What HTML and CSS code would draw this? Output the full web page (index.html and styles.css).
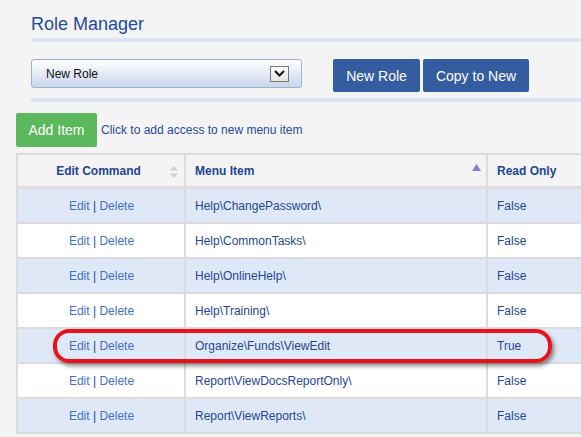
FILE: index.html
```html
<!DOCTYPE html>
<html lang="en">
<head>
    <meta charset="UTF-8">
    <title>Role Manager</title>
    <link rel="stylesheet" href="styles.css">
</head>
<body>
    <div class="page">
        <div class="top">
            <h1 class="title">Role Manager</h1>
            <div class="rule"></div>

            <!-- role picker + actions -->
            <div class="role-bar">
                <div class="picker">
                    <span class="picker-text">New Role</span>
                    <span class="picker-arrow">
                        <svg width="11" height="7" viewBox="0 0 11 7"><path d="M1 1 L5.5 5.5 L10 1" fill="none" stroke="#111" stroke-width="2"/></svg>
                    </span>
                </div>
                <button class="btn btn-blue btn-new">New Role</button>
                <button class="btn btn-blue btn-copy">Copy to New</button>
            </div>
            <div class="rule"></div>
        </div>

        <div class="add-row">
            <button class="btn btn-green">Add Item</button>
            <span class="hint">Click to add access to new menu item</span>
        </div>

        <div class="grid-wrap">
            <table class="grid">
                <colgroup>
                    <col class="c-cmd">
                    <col class="c-item">
                    <col class="c-ro">
                </colgroup>
                <thead>
                    <tr>
                        <th class="center">Edit Command
                            <span class="sort">
                                <svg width="8" height="12" viewBox="0 0 8 12"><path d="M4 0 L8 4.5 L0 4.5 Z M4 12 L8 7.5 L0 7.5 Z" fill="#cfcfcf"/></svg>
                            </span>
                        </th>
                        <th>Menu Item
                            <span class="sort sort-on">
                                <svg width="9" height="7" viewBox="0 0 9 7"><path d="M4.5 0 L9 7 L0 7 Z" fill="#7d80dc"/></svg>
                            </span>
                        </th>
                        <th>Read Only</th>
                    </tr>
                </thead>
                <tbody>
                    <tr class="alt">
                        <td class="center"><a>Edit</a> | <a>Delete</a></td>
                        <td>Help\ChangePassword\</td>
                        <td>False</td>
                    </tr>
                    <tr>
                        <td class="center"><a>Edit</a> | <a>Delete</a></td>
                        <td>Help\CommonTasks\</td>
                        <td>False</td>
                    </tr>
                    <tr class="alt">
                        <td class="center"><a>Edit</a> | <a>Delete</a></td>
                        <td>Help\OnlineHelp\</td>
                        <td>False</td>
                    </tr>
                    <tr>
                        <td class="center"><a>Edit</a> | <a>Delete</a></td>
                        <td>Help\Training\</td>
                        <td>False</td>
                    </tr>
                    <tr class="alt">
                        <td class="center"><a>Edit</a> | <a>Delete</a></td>
                        <td>Organize\Funds\ViewEdit</td>
                        <td>True</td>
                    </tr>
                    <tr>
                        <td class="center"><a>Edit</a> | <a>Delete</a></td>
                        <td>Report\ViewDocsReportOnly\</td>
                        <td>False</td>
                    </tr>
                    <tr class="alt">
                        <td class="center"><a>Edit</a> | <a>Delete</a></td>
                        <td>Report\ViewReports\</td>
                        <td>False</td>
                    </tr>
                </tbody>
            </table>
            <!-- red callout round the True row -->
            <div class="callout"></div>
        </div>
    </div>
</body>
</html>
```

FILE: styles.css
```css
html, body {
    margin: 0;
    padding: 0;
    overflow: hidden;
}
body {
    background-color: #f4f4f4;
    font-family: "Liberation Sans", Arial, sans-serif;
    font-size: 12px;
    color: #1e4797;
}
.top {
    padding-left: 31px;
}
.title {
    margin: 14px 0 4px 0;
    font-size: 18px;
    line-height: 20px;
    font-weight: normal;
    color: #1f4c9c;
}
.rule {
    height: 4px;
    background-color: #dae4f4;
}
.role-bar {
    display: flex;
    align-items: flex-start;
    padding: 17px 0 6px 0;
}
.picker {
    box-sizing: border-box;
    width: 271px;
    height: 29px;
    display: flex;
    align-items: center;
    justify-content: space-between;
    padding: 0 12px 0 14px;
    border: 1px solid #98b2dc;
    border-radius: 3px;
    background: linear-gradient(#ffffff, #c9d6eb);
    color: #111;
    font-size: 12px;
}
.picker-arrow {
    box-sizing: border-box;
    width: 19px;
    height: 16px;
    display: flex;
    align-items: center;
    justify-content: center;
    border: 1px solid #777;
    background: linear-gradient(#ffffff, #e4e4e4);
}
.btn {
    border: none;
    border-radius: 2px;
    color: #fff;
    font-family: inherit;
    font-size: 14px;
    cursor: pointer;
    padding: 0;
}
.btn-blue {
    height: 33px;
    background-color: #345ca0;
}
.btn-new {
    width: 87px;
    margin-left: 31px;
}
.btn-copy {
    width: 106px;
    margin-left: 3px;
}
.add-row {
    display: flex;
    align-items: center;
    padding: 11px 0 0 16px;
}
.btn-green {
    width: 81px;
    height: 34px;
    background-color: #5cb85c;
}
.hint {
    margin-left: 4px;
    color: #1f4c9c;
}
.grid-wrap {
    position: relative;
    margin: 6px 0 0 16px;
    overflow: hidden;
}
.grid {
    table-layout: fixed;
    width: 602px;
    border-collapse: separate;
    border-spacing: 0;
    border-left: 2px solid #dcdcdc;
    border-top: 2px solid #dcdcdc;
}
.c-cmd { width: 168px; }
.c-item { width: 302px; }
.c-ro { width: 130px; }
.grid th,
.grid td {
    box-sizing: border-box;
    padding: 0 8px 0 9px;
    border-right: 2px solid #dcdcdc;
    border-bottom: 2px solid #dcdcdc;
    text-align: left;
    white-space: nowrap;
}
.grid th {
    height: 34px;
    border-bottom-width: 3px;
    background-color: #f4f4f4;
    font-weight: bold;
    color: #1c4594;
}
.grid td {
    height: 35px;
    background-color: #fff;
}
.grid tr.alt td {
    background-color: #dfe8f6;
}
.grid .center {
    text-align: center;
}
.grid a {
    color: #3f72c8;
}
.sort {
    float: right;
    line-height: 0;
    margin-top: 2px;
    margin-right: -2px;
}
.sort-on {
    margin-top: 0;
    margin-right: -3px;
}
.callout {
    position: absolute;
    left: 37px;
    top: 176px;
    width: 499px;
    height: 34px;
    box-sizing: border-box;
    border: 4px solid #e8121a;
    border-radius: 16px;
    box-shadow: 2px 3px 4px rgba(0, 0, 0, 0.45);
}
```
